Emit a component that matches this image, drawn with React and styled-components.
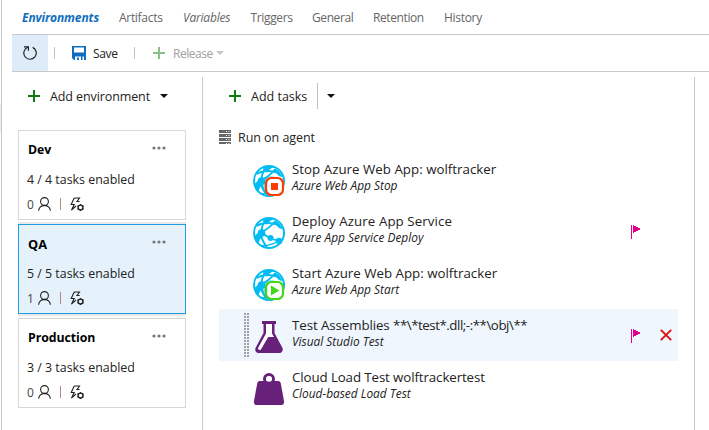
import React from "react";
import styled, { createGlobalStyle, css } from "styled-components";

const Global = createGlobalStyle`
  * { box-sizing: border-box; }
  body { margin: 0; background: #fff; font-family: "Open Sans", "Noto Sans", sans-serif; color: #222; overflow: hidden; }
  svg { display: block; flex: none; }
`;
const Window = styled.div`width: 709px; height: 430px; display: flex; background: #fff;`;
const Gutter = styled.div`
  width: 12px;
  flex: none;
  background:
    linear-gradient(#fff 0 103px, #e6eef8 103px 132px, #fff 132px) 0 0 / 1px 100% no-repeat,
    linear-gradient(#c8c8c8, #c8c8c8) 1px 0 / 1px 100% no-repeat;
`;
const Main = styled.main`width: 697px; display: flex; flex-direction: column;`;
const Tabs = styled.nav`height: 35px; flex: none; border-bottom: 1px solid #c8c8c8; padding-left: 10px; display: flex; line-height: 36px;`;
const Text = styled.span`
  display: block;
  flex: none;
  white-space: pre;
  font-size: ${p => p.$size || 12.4}px;
  letter-spacing: ${p => p.$ls || 0}px;
  color: ${p => p.$color || "#222"};
  ${p => p.$w && css`width: ${p.$w}px;`}
  ${p => p.$bold && css`font-weight: 700;`}
  ${p => p.$italic && css`font-style: italic;`}
`;
const Toolbar = styled.div`height: 37px; flex: none; border-bottom: 1px solid #c8c8c8; display: flex; align-items: center;`;
const RefreshButton = styled.button`width: 36px; height: 36px; border: 0; padding: 0; background: #deebf8; display: flex; align-items: center; justify-content: center;`;
const Divider = styled.i`width: 1px; height: ${p => p.$h || 12}px; background: ${p => p.$color || "#c0c0c0"}; margin: 0 ${p => p.$mr || 0}px 0 ${p => p.$ml || 0}px; flex: none;`;
const ToolButton = styled.div`display: flex; align-items: center; gap: ${p => p.$gap}px;`;
const Body = styled.div`flex: 1; display: flex; padding-top: 5px;`;
const Side = styled.aside`width: 191px; flex: none; border-right: 1px solid #c8c8c8; padding-left: 6px;`;
const AddBar = styled.div`height: 38px; display: flex; align-items: center; padding-left: ${p => p.$pl}px;`;
const Cards = styled.div`padding-top: 15px; display: flex; flex-direction: column; gap: 4px;`;
const Card = styled.section`
  width: 168px;
  height: 90px;
  padding: 0 19px 0 8px;
  border: 1px solid ${p => (p.$on ? "#1f9bde" : "#d8d8d8")};
  background: ${p => (p.$on ? "#e5f2fb" : "#fff")};
  ${p => p.$on && css`box-shadow: 0 2px #e8e8e8, 0 -2px #e8e8e8;`}
`;
const CardHead = styled.div`height: 37px; padding-left: 1px; display: flex; justify-content: space-between; align-items: center;`;
const More = styled.div`padding-bottom: 3px;`;
const CardStat = styled.div`height: 23px; display: flex; align-items: center;`;
const Approvals = styled.div`height: 26px; display: flex; align-items: center;`;
const Panel = styled.section`width: 492px; flex: none; border-right: 1px solid #c8c8c8; padding-left: 16px;`;
const Phase = styled.div`height: 38px; padding-top: 6px; display: flex; align-items: center; gap: 7px;`;
const Task = styled.div`height: 52px; width: 459px; display: flex; background: ${p => (p.$on ? "#eff6fd" : "#fff")};`;
const Handle = styled.div`width: 34px; padding: 4px 0 0 25px; flex: none;`;
const TaskIcon = styled.div`padding-top: 12px;`;
const TaskText = styled.div`flex: 1; min-width: 0; padding: 8px 0 0 7px;`;
const TaskTitle = styled.div`display: flex; line-height: 16px;`;
const TaskKind = styled.div`line-height: 17px;`;
const Action = styled.div`width: ${p => p.$w}px; padding-top: 20px; flex: none;`;

const Plus = ({ color = "#107c10" }) => (
  <svg width="12" height="12" viewBox="0 0 12 12"><path d="M5 0h2v5h5v2H7v5H5V7H0V5h5z" fill={color} /></svg>
);
const Caret = ({ color = "#111" }) => (
  <svg width="8" height="4" viewBox="0 0 8 4"><path d="M0 0h8L4 4z" fill={color} /></svg>
);
const RefreshIcon = () => (
  <svg width="14" height="14" viewBox="0 0 14 14" fill="none" stroke="#222" strokeWidth="1.2">
    <path d="M4.7 1.3A6.2 6.2 0 1 0 9.6 1.4" /><path d="M1 .8h4.4v4" />
  </svg>
);
const SaveIcon = () => (
  <svg width="14" height="14" viewBox="0 0 14 14">
    <path fillRule="evenodd" fill="#106ebe" d="M0 0h14v14h-2V9H3v5H2L0 12zM2 1.500v5h10v-5z" />
    <path d="M3 9h9v1.500H3zM5 11.500h2V14H5zM9 10h1.500v4H9z" fill="#106ebe" />
  </svg>
);
const Dots = () => (
  <svg width="14" height="4" viewBox="0 0 14 4" fill="#777"><circle cx="2" cy="2" r="1.6" /><circle cx="7" cy="2" r="1.6" /><circle cx="12" cy="2" r="1.6" /></svg>
);
const Person = () => (
  <svg width="13" height="14" viewBox="0 0 13 14" fill="none" stroke="#222" strokeWidth="1.1">
    <circle cx="6.5" cy="4.500" r="3.900" /><path d="M.6 13.800C1 10.600 3 8.600 6.500 8.400c3.500.2 5.500 2.200 5.900 5.400" />
  </svg>
);
const BoltGear = () => (
  <svg width="15" height="15" viewBox="0 0 15 15" fill="none" stroke="#222" strokeWidth="1.1">
    <path d="M4.200 1h5.300L7 4.500h2.600M4.200 1L1.200 7.500h3L1.400 13.200 6 9" />
    <circle cx="10.500" cy="10.500" r="2.400" strokeWidth="1.400" />
    <path d="M10.500 6.900v1.200M10.500 12.900v1.200M7.400 8.700l1 .6M12.600 11.700l1 .6M13.600 8.700l-1 .6M8.400 11.700l-1 .6" strokeWidth="1.300" />
  </svg>
);
const ServerIcon = () => (
  <svg width="12" height="14" viewBox="0 0 12 14">
    {[0, 4, 8, 12].map(y => (
      <g key={y}><path d={`M0 ${y}h12v${y === 12 ? 2 : 3}H0z`} fill="#666" /><path d={`M7 ${y + 1}h1v1H7zM9.500 ${y + 1}h1v1h-1z`} fill="#fff" /></g>
    ))}
  </svg>
);
const Globe = ({ badge }) => (
  <svg width="32" height="32" viewBox="0 0 32 32" fill="none">
    <circle cx="16" cy="16" r="15" fill="#fff" stroke="#00bcf2" strokeWidth="2" />
    <path d="M1.500 19C4 16.500 5 15.500 7 14L9.500 19C7 22 6 24 5.500 27A15 15 0 0 1 1.500 19z" fill="#00bcf2" />
    <path d="M10 2C14 .5 19 .5 22 2c-4 .8-6 2.500-8 5.500L10.500 6z" fill="#00bcf2" />
    <path d="M22 3.500c4 2 6 5 8 9l-4-1.500-4-4z" fill="#00bcf2" />
    <path d="M3.500 9C9 5.500 16 5 25 7.500M12.500 3C9.500 7 8.500 11 8.500 16M8.500 15C14 12.500 18 9.500 22.500 4M9 15.500c2.500 2.500 5 4 8 5.500s5 2 8 2.500M8 18c1 5 3 8.500 6 12" stroke="#00bcf2" strokeWidth="1.900" />
    <path d="M25 24c-5 3.500-11 5-17 4.500" stroke="#00bcf2" strokeWidth="1.400" />
    <circle cx="8.500" cy="16" r="3.800" fill="#00bcf2" /><circle cx="17.500" cy="21" r="3" fill="#00bcf2" /><circle cx="26" cy="24" r="3.200" fill="#00bcf2" />
    {badge && <path d="M6 16C10 12 18 10 22 12v16H12C8 24 6 20 6 16z" fill="#00bcf2" opacity=".55" />}
    {badge === "stop" && (<><rect x="13" y="13" width="17" height="17" rx="5.500" fill="#fff" stroke="#ff3c00" strokeWidth="2.200" /><path d="M18 18h7v7h-7z" fill="#ff3c00" /></>)}
    {badge === "start" && (<><rect x="13" y="13" width="17" height="17" rx="5.500" fill="#fff" stroke="#40d818" strokeWidth="2.200" /><path d="M18 16.500l8.500 5-8.500 5z" fill="#40d818" /></>)}
  </svg>
);
const Flask = () => (
  <svg width="32" height="32" viewBox="0 0 32 32">
    <path d="M9 0h14v3h-1.500v9L29.500 27c.8 2.500-.6 5-3 5h-21c-2.400 0-3.800-2.500-3-5l8-15V3H9z" fill="#68217a" />
    <path d="M13 3h6v9.500l2 3.500h-5.800L7.800 28.800c-2 .4-3.300-.6-2.600-2L13 12.500z" fill="#fff" />
  </svg>
);
const Weight = () => (
  <svg width="32" height="32" viewBox="0 0 32 32">
    <circle cx="16" cy="6" r="4.500" fill="none" stroke="#68217a" strokeWidth="3" />
    <path d="M7 8h18c1.600 0 2.400.8 2.800 2.500L31 28c.4 2.500-.6 4-2.600 4H3.600C1.600 32 .6 30.500 1 28l3.200-17.500C4.600 8.800 5.400 8 7 8z" fill="#68217a" />
    <circle cx="16" cy="6" r="2.800" fill="#fff" />
  </svg>
);
const Flag = () => (
  <svg width="10" height="14" viewBox="0 0 10 14" shapeRendering="crispEdges"><path d="M0 0h1v14H0zM2 0l8 4-8 4z" fill="#e3008c" /></svg>
);
const Remove = () => (
  <svg width="12" height="12" viewBox="0 0 12 12"><path d="M.8.8l10.400 10.400M11.200.8L.8 11.200" stroke="#dc1010" strokeWidth="1.900" /></svg>
);
const Grip = () => (
  <svg width="5" height="44" viewBox="0 0 5 44" fill="#a0a0a0" shapeRendering="crispEdges">
    {Array.from({ length: 15 }, (_, i) => <path key={i} d={`M0 ${i * 3}h2v2H0zM3 ${i * 3}h2v2H3z`} />)}
  </svg>
);

const tabs = [
  { t: "Environments", w: 97, ls: -0.1, on: true },
  { t: "Artifacts", w: 64, ls: -0.3 },
  { t: "Variables", w: 67.5, ls: -0.2, italic: true },
  { t: "Triggers", w: 61.5, ls: -0.35 },
  { t: "General", w: 61, ls: -0.4 },
  { t: "Retention", w: 71, ls: -0.4 },
  { t: "History", w: 40, ls: -0.3 }
];
const environments = [
  { name: "Dev", size: 12.3, tasks: "4 / 4", approvers: 0 },
  { name: "QA", size: 12.8, tasks: "5 / 5", approvers: 1, on: true },
  { name: "Production", size: 12.3, ls: -0.06, tasks: "3 / 3", approvers: 0 }
];
const tasks = [
  { icon: <Globe badge="stop" />, title: [["Stop Azure Web App: wolftracker", 0.02]], kind: "Azure Web App Stop" },
  { icon: <Globe />, title: [["Deploy Azure App Service", 0.08]], kind: "Azure App Service Deploy", flag: true },
  { icon: <Globe badge="start" />, title: [["Start Azure Web App: wolftracker", 0]], kind: "Azure Web App Start" },
  { icon: <Flask />, title: [["Test Assemblies ", -0.08], ["**\\*test*.dll;-:**\\obj\\**", -0.46]], kind: "Visual Studio Test", flag: true, on: true },
  { icon: <Weight />, title: [["Cloud Load Test wolftrackertest", -0.1]], kind: "Cloud-based Load Test" }
];

export default function App() {
  return (
    <Window>
      <Global />
      <Gutter />
      <Main>
        <Tabs>
          {tabs.map(x => (
            <Text key={x.t} $size={12} $w={x.w} $ls={x.ls} $bold={x.on} $italic={x.on || x.italic} $color={x.on ? "#106ebe" : "#666"}>{x.t}</Text>
          ))}
        </Tabs>
        <Toolbar>
          <RefreshButton><RefreshIcon /></RefreshButton>
          <Divider $ml={6} $mr={17} />
          <ToolButton $gap={7}><SaveIcon /><Text $size={12} $w={41} $ls={-0.35}>Save</Text></ToolButton>
          <Divider $mr={18} />
          <ToolButton $gap={8}><Plus color="#88c088" /><Text $size={12} $w={35} $ls={-0.45} $color="#a0a0a0">Release</Text><Caret color="#c8c8c8" /></ToolButton>
        </Toolbar>
        <Body>
          <Side>
            <AddBar $pl={10}>
              <ToolButton $gap={10}><Plus /><Text $size={12.5} $w={100} $ls={-0.1}>Add environment</Text><Caret /></ToolButton>
            </AddBar>
            <Cards>
              {environments.map(e => (
                <Card key={e.name} $on={e.on}>
                  <CardHead><Text $bold $size={e.size} $ls={e.ls} $color="#000">{e.name}</Text><More><Dots /></More></CardHead>
                  <CardStat><Text>{e.tasks} tasks enabled</Text></CardStat>
                  <Approvals>
                    <Text $size={12} $w={10.5} $color="#444">{e.approvers}</Text><Person /><Divider $ml={9} $mr={9} $color="#b08a80" /><BoltGear />
                  </Approvals>
                </Card>
              ))}
            </Cards>
          </Side>
          <Panel>
            <AddBar $pl={10}>
              <ToolButton $gap={10}><Plus /><Text $size={12.5} $w={56}>Add tasks</Text></ToolButton>
              <Divider $h={26} $ml={10} $mr={9} />
              <Caret />
            </AddBar>
            <Phase><ServerIcon /><Text $size={12.5} $ls={-0.05}>Run on agent</Text></Phase>
            {tasks.map(t => (
              <Task key={t.title[0][0]} $on={t.on}>
                <Handle>{t.on && <Grip />}</Handle>
                <TaskIcon>{t.icon}</TaskIcon>
                <TaskText>
                  <TaskTitle>{t.title.map(([s, ls]) => <Text key={s} $size={13.3} $ls={ls}>{s}</Text>)}</TaskTitle>
                  <TaskKind><Text $size={11.9} $italic>{t.kind}</Text></TaskKind>
                </TaskText>
                <Action $w={29}>{t.flag && <Flag />}</Action>
                <Action $w={18}>{t.on && <Remove />}</Action>
              </Task>
            ))}
          </Panel>
        </Body>
      </Main>
    </Window>
  );
}
